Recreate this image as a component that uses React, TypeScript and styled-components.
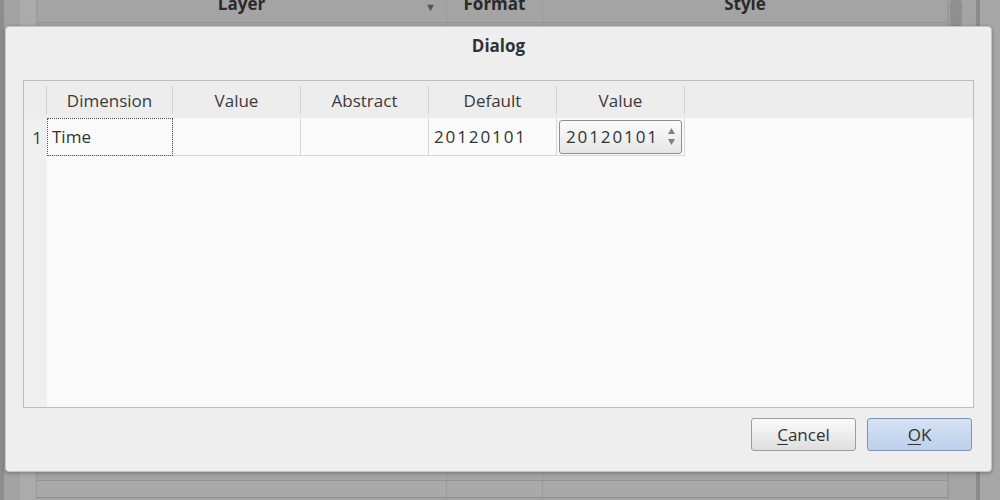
import styled, { createGlobalStyle } from "styled-components";

const GlobalStyle = createGlobalStyle`
  html, body {
    margin: 0;
    padding: 0;
  }
  body {
    font-family: "Open Sans", "Noto Sans", sans-serif;
    color: #2e3436;
  }
`;

const COLUMNS = [
  { title: "Dimension", width: 126 },
  { title: "Value", width: 128 },
  { title: "Abstract", width: 128 },
  { title: "Default", width: 128 },
  { title: "Value", width: 128 },
];

export default function App() {
  return (
    <>
      <GlobalStyle />
      <Screen>
        <ParentWindow>
          <EdgeStrip />
          <GutterStrip />
          <ParentTable>
            <ParentHeader>
              <ParentHead $w={410}>
                Layer
                <SortArrow>▼</SortArrow>
              </ParentHead>
              <ParentHead $w={96}>Format</ParentHead>
              <ParentHead $w={405}>Style</ParentHead>
            </ParentHeader>
            <ParentBody>
              <ParentCol $w={410} />
              <ParentCol $w={96} />
              <ParentCol $w={405} />
            </ParentBody>
          </ParentTable>
          <ScrollTrack>
            <ScrollThumb />
          </ScrollTrack>
          <RightPane />
        </ParentWindow>

        <Dialog>
          <Title>Dialog</Title>
          <Content>
            <TableFrame>
              <HeaderRow>
                <Corner />
                {COLUMNS.map((c, i) => (
                  <HeaderCell key={i} $w={c.width}>
                    {c.title}
                  </HeaderCell>
                ))}
                <HeaderFill />
              </HeaderRow>
              <TableBody>
                <RowHeaders>
                  <RowNumber>1</RowNumber>
                </RowHeaders>
                <Cells>
                  <DataRow>
                    <Cell $w={126} $focused>
                      Time
                    </Cell>
                    <Cell $w={128} />
                    <Cell $w={128} />
                    <Cell $w={128}>
                      <Digits>20120101</Digits>
                    </Cell>
                    <Cell $w={128}>
                      <SpinBox>
                        <Digits>20120101</Digits>
                        <SpinArrows>
                          <svg width="7" height="6" viewBox="0 0 7 6">
                            <path d="M3.5 0 L7 6 L0 6 Z" fill="#808080" />
                          </svg>
                          <svg width="7" height="6" viewBox="0 0 7 6">
                            <path d="M0 0 L7 0 L3.5 6 Z" fill="#808080" />
                          </svg>
                        </SpinArrows>
                      </SpinBox>
                    </Cell>
                  </DataRow>
                </Cells>
              </TableBody>
            </TableFrame>
          </Content>
          <ButtonRow>
            <Button>
              <u>C</u>ancel
            </Button>
            <Button $primary>
              <u>O</u>K
            </Button>
          </ButtonRow>
        </Dialog>
      </Screen>
    </>
  );
}

const Screen = styled.div`
  position: relative;
  width: 1000px;
  height: 500px;
  overflow: hidden;
  background: #a4a4a4;
`;

const ParentWindow = styled.div`
  display: flex;
  height: 100%;
`;

const EdgeStrip = styled.div`
  width: 4px;
  background: #8c8c8c;
`;

const GutterStrip = styled.div`
  width: 16px;
  background: #a3a3a3;
`;

const ParentTable = styled.div`
  display: flex;
  flex-direction: column;
  padding-left: 16px;
  background: linear-gradient(to right, #ababab 16px, transparent 16px);
  border-right: 1px solid #9a9a9a;
`;

const ParentHeader = styled.div`
  display: flex;
  margin-top: -16px;
  height: 38px;
  border-bottom: 1px solid #939393;
  border-left: 1px solid #999999;
`;

const ParentHead = styled.div<{ $w: number }>`
  position: relative;
  width: ${(p) => p.$w}px;
  display: flex;
  align-items: center;
  justify-content: center;
  font-weight: bold;
  font-size: 17px;
  color: #2a2a2a;
  border-right: 1px solid #999999;
  box-sizing: border-box;
`;

const SortArrow = styled.span`
  position: absolute;
  right: 10px;
  top: 15px;
  font-size: 11px;
  color: #555;
`;

const ParentBody = styled.div`
  flex: 1;
  display: flex;
  border-left: 1px solid #999999;
`;

const ParentCol = styled.div<{ $w: number }>`
  width: ${(p) => p.$w}px;
  border-right: 1px solid #9a9a9a;
  box-sizing: border-box;
  background: linear-gradient(
    to bottom,
    transparent 457px,
    #939393 457px,
    #939393 458px,
    #a9a9a9 458px,
    #a9a9a9 474px,
    #909090 474px,
    #909090 475px,
    transparent 475px
  );
`;

const ScrollTrack = styled.div`
  width: 14px;
  padding: 0 1px;
  box-sizing: border-box;
`;

const ScrollThumb = styled.div`
  margin-top: -2px;
  height: 30px;
  background: #8f8f8f;
  border-radius: 6px;
`;

const RightPane = styled.div`
  flex: 1;
  background: linear-gradient(to right, #a4a4a4 13px, #8b8b8b 13px, #8b8b8b 17px, #a7a7a7 17px);
`;

const Dialog = styled.div`
  position: absolute;
  left: 5px;
  top: 26px;
  width: 987px;
  height: 446px;
  box-sizing: border-box;
  background: #eeeeee;
  border: 1px solid #c4c4c4;
  border-radius: 4px;
  box-shadow: 0 1px 4px rgba(0, 0, 0, 0.3);
  display: flex;
  flex-direction: column;
`;

const Title = styled.div`
  height: 53px;
  line-height: 38px;
  text-align: center;
  font-weight: bold;
  font-size: 17px;
  color: #2e3436;
`;

const Content = styled.div`
  padding: 0 17px;
`;

const TableFrame = styled.div`
  height: 328px;
  box-sizing: border-box;
  border: 1px solid #bdbdbd;
  background: #fafafa;
  display: flex;
  flex-direction: column;
`;

const HeaderRow = styled.div`
  display: flex;
  height: 37px;
  background: #ededed;
`;

const Corner = styled.div`
  width: 23px;
  margin: 5px 0 4px;
  border-right: 1px solid #d2d2d2;
  box-sizing: border-box;
`;

const HeaderCell = styled.div<{ $w: number }>`
  width: ${(p) => p.$w}px;
  margin: 5px 0 4px;
  box-sizing: border-box;
  border-right: 1px solid #d2d2d2;
  display: flex;
  align-items: center;
  justify-content: center;
  font-size: 17px;
  color: #3a3a3a;
`;

const HeaderFill = styled.div`
  flex: 1;
`;

const TableBody = styled.div`
  flex: 1;
  display: flex;
`;

const RowHeaders = styled.div`
  width: 23px;
  background: #efefef;
`;

const RowNumber = styled.div`
  height: 38px;
  display: flex;
  align-items: center;
  justify-content: flex-end;
  padding-right: 5px;
  font-size: 17px;
  color: #3a3a3a;
`;

const Cells = styled.div`
  flex: 1;
`;

const DataRow = styled.div`
  display: flex;
  height: 38px;
`;

const Cell = styled.div<{ $w: number; $focused?: boolean }>`
  width: ${(p) => p.$w}px;
  box-sizing: border-box;
  border-right: 1px solid #d8d8d8;
  border-bottom: 1px solid #d8d8d8;
  display: flex;
  align-items: center;
  padding: 0 5px;
  font-size: 17px;
  color: #2e3436;
  outline: ${(p) => (p.$focused ? "1px dotted #555" : "none")};
  outline-offset: -1px;
`;

const Digits = styled.span`
  letter-spacing: 1.9px;
`;

const SpinBox = styled.div`
  margin: 0 -3px;
  width: 125px;
  height: 34px;
  box-sizing: border-box;
  border: 1px solid #8e8e8e;
  border-radius: 3px;
  background: linear-gradient(to bottom, #fbfbfb, #e6e6e6);
  display: flex;
  align-items: center;
  justify-content: space-between;
  padding: 0 6px 0 6px;
  font-size: 17px;
  color: #2e3436;
`;

const SpinArrows = styled.div`
  display: flex;
  flex-direction: column;
  gap: 5px;
`;

const ButtonRow = styled.div`
  display: flex;
  justify-content: flex-end;
  gap: 11px;
  padding: 10px 19px 0;
`;

const Button = styled.div<{ $primary?: boolean }>`
  width: 105px;
  height: 33px;
  box-sizing: border-box;
  display: flex;
  align-items: center;
  justify-content: center;
  font-size: 17px;
  color: #2e3436;
  border-radius: 3px;
  border: 1px solid ${(p) => (p.$primary ? "#8193b4" : "#9c9c9c")};
  background: ${(p) =>
    p.$primary
      ? "linear-gradient(to bottom, #d6e2f3, #bcd0ec)"
      : "linear-gradient(to bottom, #fbfbfb, #dedede)"};

  u {
    text-underline-offset: 3px;
  }
`;
